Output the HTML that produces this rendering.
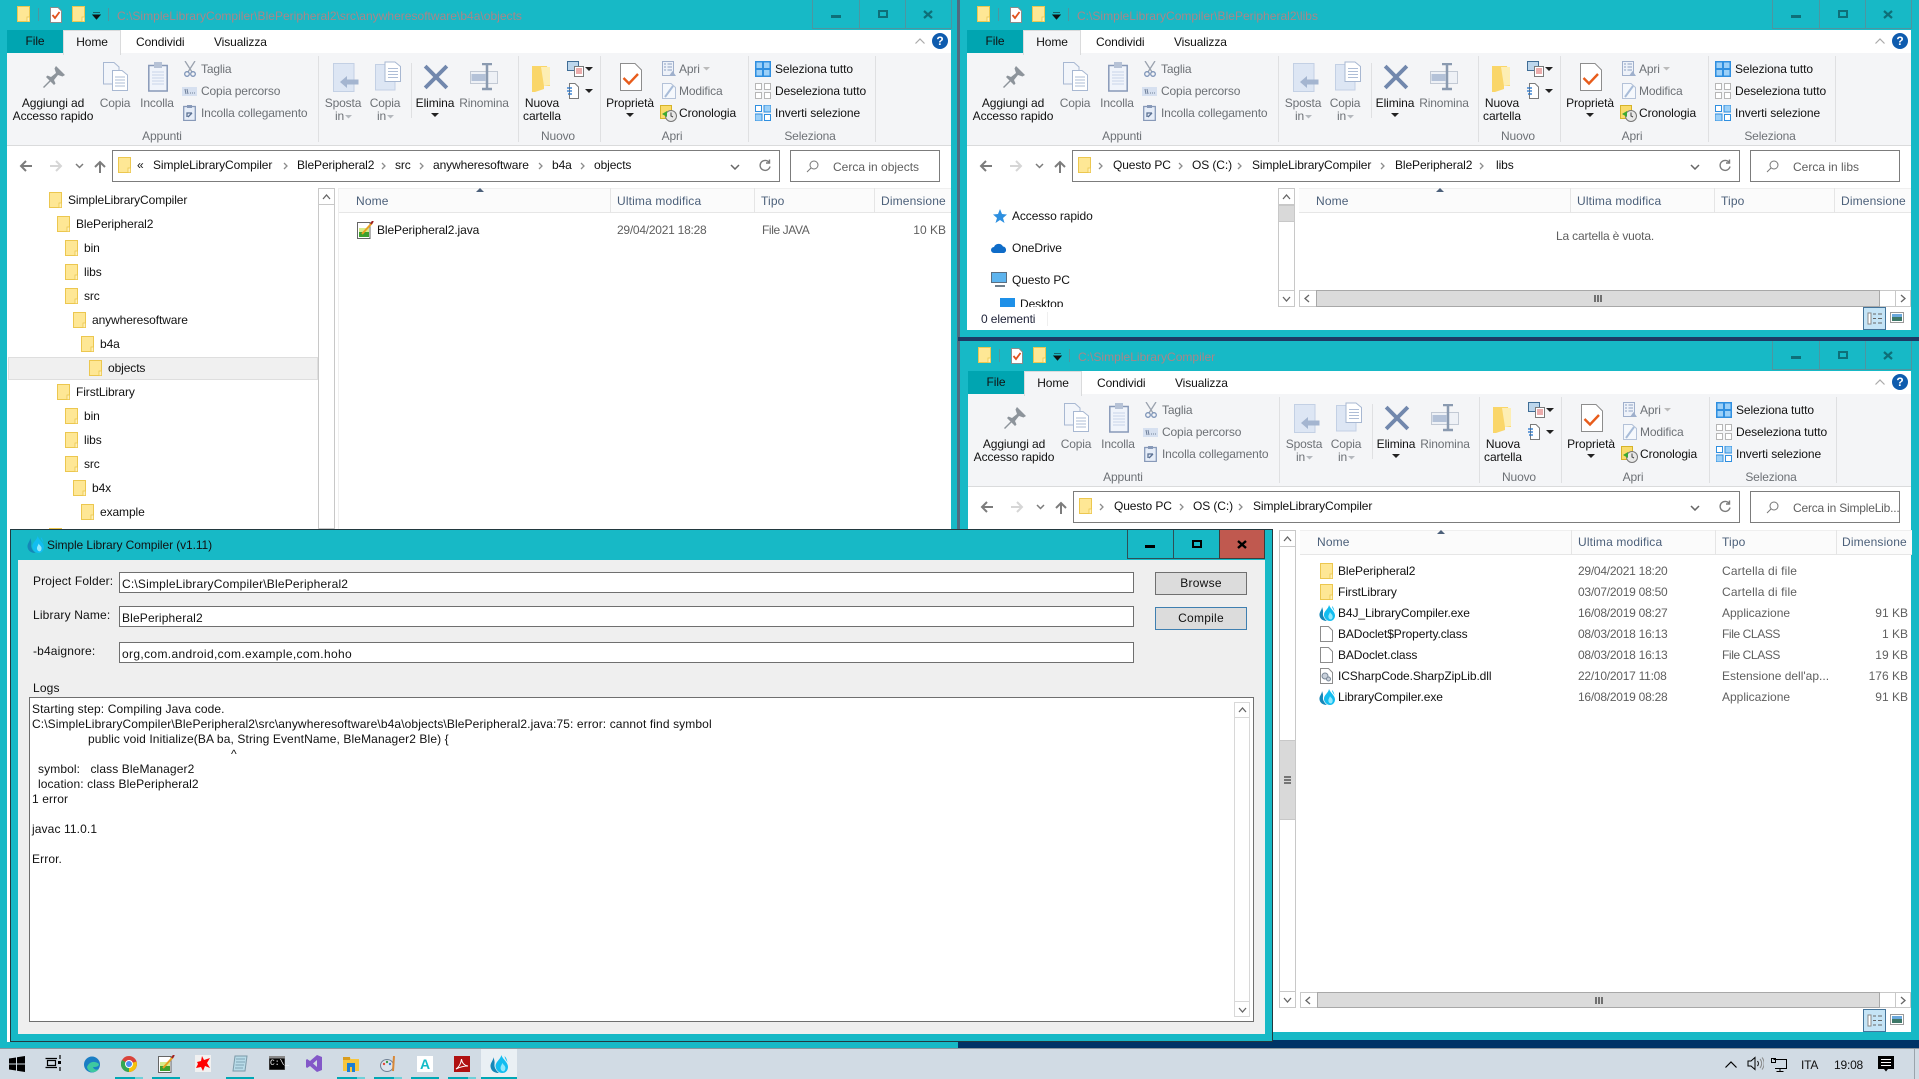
<!DOCTYPE html>
<html lang="it"><head><meta charset="utf-8"><title>Simple Library Compiler</title>
<style>
html,body{margin:0;padding:0;width:1919px;height:1079px;overflow:hidden;background:#17b9c6}
body{position:relative;font:12px/14px "Liberation Sans",sans-serif;color:#1a1a1a;letter-spacing:-.1px}
div,svg,span{position:absolute;box-sizing:border-box}
.t{white-space:pre;height:14px}
.c{transform:translateX(-50%)}
.g{color:#6d7176;letter-spacing:-.15px}
.k{color:#111}
.h{color:#4c607a;letter-spacing:.15px}
.m{color:#5f5f5f;letter-spacing:0}
.d{letter-spacing:-.25px}
.w{overflow:hidden;background:#17b9c6}
.in{left:7px;top:30px;background:#fff}
.rb{left:7px;top:54px;height:91px;background:#f4f5f7;border-bottom:1px solid #dadbdc}
.sep{width:1px;background:#dfe0e2}
.tt{color:#ac8587;left:117px;top:9px;letter-spacing:.02px}
.v{width:1px;background:#4d96a0;top:0;height:29px}
.box{border:1px solid #7c7c7c;background:#fff}
.hd{top:188px;height:25px;background:#fbfbfb;border-bottom:1px solid #e6e6e6;border-top:1px solid #efefef}
.cs{width:1px;top:188px;height:25px;background:#e5e5e5}
.sb{background:#fff;border:1px solid #c8c8c8}
.in2{background:#fff;border:1px solid #6f6f6f}
.btn{background:#dcdcdc;border:1px solid #707070;text-align:center;line-height:21px;color:#111;letter-spacing:.25px}
.ln{white-space:pre;color:#111;height:14px;letter-spacing:.11px}
.f{color:#111;letter-spacing:.15px}
.u{height:2px;top:1077px;background:#00a8b5}
.ul{height:2px;top:1077px;background:#6fd0d8}
</style></head><body>
<svg width="0" height="0" style="left:0;top:0">
<defs>
<symbol id="fd" viewBox="0 0 13 16"><rect x=".5" y=".5" width="12" height="15" fill="#fee795" stroke="#ecc74f"/><rect x="10" y="11" width="2.6" height="4.6" fill="#fff0b8" stroke="#ecc74f" stroke-width=".8"/></symbol>
<symbol id="chk" viewBox="0 0 12 16"><path d="M.5.5H8L11.5 4V15.5H.5Z" fill="#fff" stroke="#8c8c8c"/><path d="M2.5 8 5 11 9.500 5" fill="none" stroke="#e2511c" stroke-width="1.800"/></symbol>
<symbol id="ch" viewBox="0 0 5 8"><path d="M1 1 4 4 1 7" fill="none" stroke="#8c8c8c" stroke-width="1.300"/></symbol>
<symbol id="pin" viewBox="0 0 24 24"><path d="M14 1 23 10 20.500 11.500 16 10 12 15 13.500 18.500 12 20 8.500 16.500 2 23 1 22 7.500 15.500 4 12 5.500 10.500 9 12 14 8 12.500 3.500Z" fill="#8d949b"/></symbol>
<symbol id="cp" viewBox="0 0 25 29"><path d="M.5.5H11L16 5V22H.5Z" fill="#f2f5fa" stroke="#a8b8d2"/><path d="M9.500 8.500H19L24.500 13V28.500H9.500Z" fill="#fff" stroke="#a8b8d2"/><path d="M12 15H22M12 18H22M12 21H22M12 24H22" stroke="#aebdd6"/></symbol>
<symbol id="ps" viewBox="0 0 20 30"><rect x=".8" y="3.500" width="18.400" height="25.500" fill="#f0f4fb" stroke="#8899b8" stroke-width="1.500"/><rect x="6" y="0" width="8" height="6" fill="#b6c2d6"/><path d="M4 10H16M4 13H16M4 16H16M4 19H16M4 22H16" stroke="#c8d4e8"/></symbol>
<symbol id="sc" viewBox="0 0 12 16"><path d="M1 0 8 11M11 0 4 11" stroke="#9aa2ae" stroke-width="1.300"/><circle cx="3" cy="13" r="2.300" fill="none" stroke="#7d94b8" stroke-width="1.300"/><circle cx="9" cy="13" r="2.300" fill="none" stroke="#7d94b8" stroke-width="1.300"/></symbol>
<symbol id="cpp" viewBox="0 0 15 9"><rect width="15" height="9" fill="#d6e0f0"/><path d="M3 2 4 7M5 2 6 7M8 6H9M10 6H11M12 6H13" stroke="#6f7f99"/></symbol>
<symbol id="icl" viewBox="0 0 13 16"><rect x=".7" y="1.500" width="11.600" height="14" fill="#e6edf8" stroke="#8799b8" stroke-width="1.300"/><rect x="4" y="0" width="5" height="3" fill="#8799b8"/><path d="M4 12V8H9M9 8 5 12" fill="none" stroke="#5a7092" stroke-width="1.300"/></symbol>
<symbol id="mv" viewBox="0 0 26 29"><path d="M.5.500H21V28.500H.5Z" fill="#dde6f4" stroke="#c3d0e4"/><path d="M7 19 14 13V16.500H25.500V21.500H14V25Z" fill="#a4b5d0"/></symbol>
<symbol id="cpy" viewBox="0 0 26 29"><path d="M.5 3H20V28.500H.5Z" fill="#dde6f4" stroke="#c3d0e4"/><path d="M10 .5H20L25.500 5V20H10Z" fill="#fff" stroke="#a8b8d2"/><path d="M13 7H23M13 10H23M13 13H23M13 16H23" stroke="#aebdd6"/></symbol>
<symbol id="x" viewBox="0 0 24 24"><path d="M2 2 22 22M22 2 2 22" stroke="#7288ad" stroke-width="3.600"/></symbol>
<symbol id="rn" viewBox="0 0 28 28"><rect x=".5" y="8.500" width="27" height="12" fill="#eef1f6" stroke="#c2c9d4"/><rect x="1.500" y="11" width="14" height="7" fill="#b4c2d8"/><path d="M12 1H22M12 26H22M17 1V26" stroke="#8a9ab0" stroke-width="2.500"/></symbol>
<symbol id="nf" viewBox="0 0 19 28"><path d="M0 1H15L18 21 12 21 12 24 3 27 0 27Z" fill="#fad669"/><path d="M9 2H18V20L12 21 9 2Z" fill="#fdeeb4"/></symbol>
<symbol id="ni" viewBox="0 0 18 16"><rect x=".5" y=".5" width="11" height="9" fill="#bcd6ec" stroke="#3f6d96"/><rect x="7.500" y="5.500" width="9" height="10" fill="#fff" stroke="#7a7a7a"/><path d="M9 8H15M9 10H15M9 12H15" stroke="#d85a5a"/></symbol>
<symbol id="ne" viewBox="0 0 12 16"><path d="M2.500.5H8L11.500 4V15.500H2.500Z" fill="#fff" stroke="#7a7a7a"/><path d="M0 5H5M0 8H5M1 11H5" stroke="#1f6fc8" stroke-width="1.200"/></symbol>
<symbol id="pr" viewBox="0 0 22 28"><path d="M.5.500H15L21.500 7V27.500H.5Z" fill="#fff" stroke="#8d8d8d"/><path d="M3.500 15 9 20.500 18 11" fill="none" stroke="#e85c1b" stroke-width="2.400"/></symbol>
<symbol id="ap" viewBox="0 0 14 16"><rect x=".5" y=".5" width="11" height="14" fill="#eef2f9" stroke="#a0b0cc"/><path d="M2 3H4M2 6H4M2 9H4M5.500 3H10M5.500 6H10M5.500 9H10" stroke="#8fa3c2"/><path d="M7 15 10.500 10 14 15" fill="#9fb0cc"/></symbol>
<symbol id="md" viewBox="0 0 14 16"><path d="M.5.500H9L13.500 4.500V15.500H.5Z" fill="#f5f8fc" stroke="#b4c2d8"/><path d="M3 14 11 3" stroke="#a8bcd8" stroke-width="2"/></symbol>
<symbol id="cr" viewBox="0 0 17 17"><rect x=".5" y=".5" width="11" height="13" fill="#f9dc6b" stroke="#d6b32a"/><circle cx="11" cy="11" r="5.500" fill="#e8e8e8" stroke="#777"/><path d="M11 7.500V11L13 12" stroke="#444" fill="none"/><path d="M2 9 7 6V12Z" fill="#3ea832"/></symbol>
<symbol id="sa" viewBox="0 0 16 16"><rect width="16" height="16" fill="#2f8fe0"/><rect x="1.500" y="1.500" width="5.500" height="5.500" fill="#9cd0f8"/><rect x="9" y="1.500" width="5.500" height="5.500" fill="#9cd0f8"/><rect x="1.500" y="9" width="5.500" height="5.500" fill="#9cd0f8"/><rect x="9" y="9" width="5.500" height="5.500" fill="#9cd0f8"/></symbol>
<symbol id="sn" viewBox="0 0 16 16"><g fill="#fff" stroke="#b6b6b6"><rect x=".5" y=".5" width="6" height="6"/><rect x="9.500" y=".5" width="6" height="6"/><rect x=".5" y="9.500" width="6" height="6"/><rect x="9.500" y="9.500" width="6" height="6"/></g></symbol>
<symbol id="si" viewBox="0 0 16 16"><g stroke="#2f8fe0"><rect x=".5" y=".5" width="6" height="6" fill="#fff"/><rect x="9" y="0" width="7" height="7" fill="#9cd0f8"/><rect x="0" y="9" width="7" height="7" fill="#9cd0f8"/><rect x="9.500" y="9.500" width="6" height="6" fill="#fff"/></g></symbol>
<symbol id="fl" viewBox="0 0 16 16"><path d="M3 2C3 5 0 7 .5 10.500 1 14 4 16 8 16 5.500 14 3.500 11 4 8 4.300 6 3.800 4 3 2Z" fill="#1487b8"/><path d="M10 0C9.500 4 4.500 6 5 10.500 5.500 13.500 8 16 11 16 14 16 16 13.500 16 10.500 16 6.500 11.500 4 10 0Z" fill="#12bdf0"/><path d="M13 1C13 3 14.500 4.500 15.500 6.500 15 4 14.500 2.500 13 1Z" fill="#12bdf0"/><path d="M11 7C10.500 9 9 10 9.500 12.500 10 14 11 14.500 12 14.500 13.500 14 14 12 13.500 10.500 13 9 11.500 8.500 11 7Z" fill="#8fe8fd"/></symbol>
<symbol id="fp" viewBox="0 0 13 16"><path d="M.5.500H8.500L12.500 4.500V15.500H.5Z" fill="#fff" stroke="#8c8c8c"/></symbol>
</defs></svg>

<!-- ===== WINDOW 1 ===== -->
<div class="w" style="left:0;top:0;width:957px;height:1049px">
<svg style="left:17px;top:6px" width="13" height="16"><use href="#fd"/></svg><div class="v" style="left:38px;top:8px;height:13px"></div><svg style="left:50px;top:7px" width="12" height="16"><use href="#chk"/></svg><svg style="left:72px;top:6px" width="13" height="16"><use href="#fd"/></svg><svg style="left:92px;top:12px" width="9" height="8"><path d="M1 0H8M1 3H8L4.500 7Z" stroke="#111" fill="#111"/></svg><div class="v" style="left:108px;top:8px;height:13px"></div>
<div class="t tt">C:\SimpleLibraryCompiler\BlePeripheral2\src\anywheresoftware\b4a\objects</div>
<div class="v" style="left:812px"></div><div class="v" style="left:859px"></div><div class="v" style="left:905px"></div><div class="v" style="left:951px"></div><div style="left:812px;top:28px;width:140px;height:1px;background:#4d96a0"></div>
<div style="left:831px;top:15px;width:10px;height:3px;background:#0e6f78"></div><div style="left:878px;top:10px;width:10px;height:8px;border:2px solid #0e6f78"></div><svg style="left:923px;top:10px" width="10" height="9"><path d="M1 1 9 8M9 1 1 8" stroke="#0e6f78" stroke-width="2.200"/></svg>
<div class="in" style="width:944px;height:1012px"></div>
<div style="left:7px;top:30px;width:56px;height:23px;background:#00a5b1;text-align:center;line-height:23px;color:#111">File</div>
<div style="left:63px;top:30px;width:58px;height:25px;background:#f4f5f7;border:1px solid #dadbdc;border-bottom:0;text-align:center;line-height:22px;z-index:2;color:#111">Home</div>
<div class="t k" style="left:136px;top:35px">Condividi</div><div class="t k" style="left:214px;top:35px">Visualizza</div>
<div class="rb" style="top:53px;width:944px;height:93px"></div>
<svg style="left:915px;top:38px" width="10" height="6"><path d="M.5 5.500 5 1 9.500 5.500" fill="none" stroke="#aaa" stroke-width="1.200"/></svg>
<div style="left:932px;top:33px;width:16px;height:16px;border-radius:50%;background:#0f5cae;color:#fff;text-align:center;font-weight:bold;line-height:16px">?</div>
<svg style="left:42px;top:65px" width="24" height="24"><use href="#pin"/></svg><div class="t k c" style="left:53px;top:96px">Aggiungi ad</div><div class="t k c" style="left:53px;top:109px">Accesso rapido</div>
<svg style="left:103px;top:62px" width="25" height="29"><use href="#cp"/></svg><div class="t g c" style="left:115px;top:96px">Copia</div>
<svg style="left:148px;top:62px" width="20" height="30"><use href="#ps"/></svg><div class="t g c" style="left:157px;top:96px">Incolla</div>
<svg style="left:184px;top:61px" width="12" height="16"><use href="#sc"/></svg><div class="t g" style="left:201px;top:62px">Taglia</div>
<svg style="left:182px;top:87px" width="15" height="9"><use href="#cpp"/></svg><div class="t g" style="left:201px;top:84px">Copia percorso</div>
<svg style="left:183px;top:105px" width="13" height="16"><use href="#icl"/></svg><div class="t g" style="left:201px;top:106px">Incolla collegamento</div>
<div class="t g c" style="left:162px;top:129px">Appunti</div><div class="sep" style="left:318px;top:56px;height:86px"></div>
<svg style="left:333px;top:63px" width="26" height="29"><use href="#mv"/></svg><div class="t g c" style="left:343px;top:96px">Sposta</div><div class="t g" style="left:335px;top:109px">in</div><svg style="left:345px;top:115px" width="8" height="4"><path d="M0 0H7L3.500 3.500Z" fill="#b4b8bd"/></svg>
<svg style="left:375px;top:61px" width="26" height="30"><use href="#cpy"/></svg><div class="t g c" style="left:385px;top:96px">Copia</div><div class="t g" style="left:377px;top:109px">in</div><svg style="left:387px;top:115px" width="8" height="4"><path d="M0 0H7L3.500 3.500Z" fill="#b4b8bd"/></svg>
<div class="sep" style="left:411px;top:63px;height:55px"></div>
<svg style="left:423px;top:64px" width="26" height="26"><use href="#x"/></svg><div class="t k c" style="left:435px;top:96px">Elimina</div><svg style="left:431px;top:113px" width="9" height="5"><path d="M0 0H8L4 4Z" fill="#222"/></svg>
<svg style="left:470px;top:63px" width="28" height="28"><use href="#rn"/></svg><div class="t g c" style="left:484px;top:96px">Rinomina</div>
<div class="sep" style="left:518px;top:56px;height:86px"></div>
<svg style="left:532px;top:65px" width="19" height="28"><use href="#nf"/></svg><div class="t k c" style="left:542px;top:96px">Nuova</div><div class="t k c" style="left:542px;top:109px">cartella</div>
<svg style="left:567px;top:61px" width="18" height="16"><use href="#ni"/></svg><svg style="left:585px;top:67px" width="9" height="5"><path d="M0 0H8L4 4Z" fill="#222"/></svg>
<svg style="left:567px;top:83px" width="12" height="16"><use href="#ne"/></svg><svg style="left:585px;top:89px" width="9" height="5"><path d="M0 0H8L4 4Z" fill="#222"/></svg>
<div class="t g c" style="left:558px;top:129px">Nuovo</div><div class="sep" style="left:600px;top:56px;height:86px"></div>
<svg style="left:620px;top:63px" width="22" height="28"><use href="#pr"/></svg><div class="t k c" style="left:630px;top:96px">Proprietà</div><svg style="left:626px;top:113px" width="9" height="5"><path d="M0 0H8L4 4Z" fill="#222"/></svg>
<svg style="left:662px;top:61px" width="14" height="16"><use href="#ap"/></svg><div class="t g" style="left:679px;top:62px">Apri</div><svg style="left:703px;top:67px" width="8" height="4"><path d="M0 0H7L3.500 3.500Z" fill="#bbb"/></svg>
<svg style="left:662px;top:83px" width="14" height="16"><use href="#md"/></svg><div class="t g" style="left:679px;top:84px">Modifica</div>
<svg style="left:660px;top:105px" width="17" height="17"><use href="#cr"/></svg><div class="t k" style="left:679px;top:106px">Cronologia</div>
<div class="t g c" style="left:672px;top:129px">Apri</div><div class="sep" style="left:748px;top:56px;height:86px"></div>
<svg style="left:755px;top:61px" width="16" height="16"><use href="#sa"/></svg><div class="t k" style="left:775px;top:62px">Seleziona tutto</div>
<svg style="left:755px;top:83px" width="16" height="16"><use href="#sn"/></svg><div class="t k" style="left:775px;top:84px">Deseleziona tutto</div>
<svg style="left:755px;top:105px" width="16" height="16"><use href="#si"/></svg><div class="t k" style="left:775px;top:106px">Inverti selezione</div>
<div class="t g c" style="left:810px;top:129px">Seleziona</div><div class="sep" style="left:875px;top:56px;height:86px"></div>
<svg style="left:19px;top:159px" width="14" height="14"><path d="M13 7H2M7 2 2 7 7 12" fill="none" stroke="#7c7c7c" stroke-width="2"/></svg><svg style="left:49px;top:159px" width="14" height="14"><path d="M1 7H12M7 2 12 7 7 12" fill="none" stroke="#d6d6d6" stroke-width="2"/></svg><svg style="left:75px;top:163px" width="9" height="6"><path d="M1 1 4.500 4.500 8 1" fill="none" stroke="#7c7c7c" stroke-width="1.500"/></svg><svg style="left:93px;top:160px" width="14" height="14"><path d="M7 13V2M2 7 7 2 12 7" fill="none" stroke="#7c7c7c" stroke-width="2"/></svg>
<div class="box" style="left:112px;top:150px;width:668px;height:32px"></div><svg style="left:118px;top:157px" width="13" height="16"><use href="#fd"/></svg>
<div class="t k" style="left:137px;top:158px">«</div><div class="t k" style="left:153px;top:158px">SimpleLibraryCompiler</div><svg style="left:283px;top:162px" width="5" height="8"><use href="#ch"/></svg><div class="t k" style="left:297px;top:158px">BlePeripheral2</div><svg style="left:381px;top:162px" width="5" height="8"><use href="#ch"/></svg><div class="t k" style="left:395px;top:158px">src</div><svg style="left:419px;top:162px" width="5" height="8"><use href="#ch"/></svg><div class="t k" style="left:433px;top:158px">anywheresoftware</div><svg style="left:538px;top:162px" width="5" height="8"><use href="#ch"/></svg><div class="t k" style="left:552px;top:158px">b4a</div><svg style="left:580px;top:162px" width="5" height="8"><use href="#ch"/></svg><div class="t k" style="left:594px;top:158px">objects</div>
<svg style="left:730px;top:164px" width="10" height="6"><path d="M1 1 5 5 9 1" fill="none" stroke="#666" stroke-width="1.500"/></svg><svg style="left:759px;top:159px" width="12" height="13"><path d="M10.500 4A5 5 0 1 0 11 7.500M10.500 .5V4H7" fill="none" stroke="#7c7c7c" stroke-width="1.400"/></svg>
<div class="box" style="left:790px;top:150px;width:150px;height:32px"></div><svg style="left:806px;top:160px" width="13" height="13"><circle cx="8" cy="5" r="4" fill="none" stroke="#777"/><path d="M5 8 1 12" stroke="#777"/></svg><div class="t m" style="left:833px;top:160px">Cerca in objects</div>
<div class="sb" style="left:318px;top:188px;width:17px;height:341px"></div><div class="sb" style="left:318px;top:188px;width:17px;height:17px"></div><svg style="left:322px;top:194px" width="9" height="6"><path d="M1 5 4.500 1 8 5" fill="none" stroke="#666" stroke-width="1.300"/></svg>
<div style="left:338px;top:188px;width:1px;height:341px;background:#efefef"></div>
<div class="hd" style="left:339px;width:612px"></div><div class="cs" style="left:610px"></div><div class="cs" style="left:754px"></div><div class="cs" style="left:874px"></div>
<div class="t h" style="left:356px;top:194px">Nome</div><div class="t h" style="left:617px;top:194px">Ultima modifica</div><div class="t h" style="left:761px;top:194px">Tipo</div><div class="t h" style="left:881px;top:194px">Dimensione</div>
<svg style="left:476px;top:188px" width="8" height="4"><path d="M0 4H8L4 0Z" fill="#4c607a"/></svg>
<svg style="left:357px;top:221px" width="17" height="18"><path d="M.5 1.500H13V17.500H.5Z" fill="#fff" stroke="#666"/><rect x="2" y="11" width="10" height="5" fill="#3da02e"/><rect x="2" y="7" width="10" height="4" fill="#d6ec8a"/><path d="M5 13 15 2" stroke="#e8a020" stroke-width="2"/><path d="M14 3 16 0" stroke="#a02020" stroke-width="2"/></svg>
<div class="t k" style="left:377px;top:223px">BlePeripheral2.java</div><div class="t m d" style="left:617px;top:223px">29/04/2021 18:28</div><div class="t m" style="left:762px;top:223px;letter-spacing:-.4px">File JAVA</div><div class="t m" style="right:11px;top:223px">10 KB</div>
<div style="left:8px;top:357px;width:310px;height:23px;background:#f0f0f0;border:1px solid #dedede"></div>
<svg style="left:49px;top:192px" width="13" height="16"><use href="#fd"/></svg><div class="t k" style="left:68px;top:193px">SimpleLibraryCompiler</div>
<svg style="left:57px;top:216px" width="13" height="16"><use href="#fd"/></svg><div class="t k" style="left:76px;top:217px">BlePeripheral2</div>
<svg style="left:65px;top:240px" width="13" height="16"><use href="#fd"/></svg><div class="t k" style="left:84px;top:241px">bin</div>
<svg style="left:65px;top:264px" width="13" height="16"><use href="#fd"/></svg><div class="t k" style="left:84px;top:265px">libs</div>
<svg style="left:65px;top:288px" width="13" height="16"><use href="#fd"/></svg><div class="t k" style="left:84px;top:289px">src</div>
<svg style="left:73px;top:312px" width="13" height="16"><use href="#fd"/></svg><div class="t k" style="left:92px;top:313px">anywheresoftware</div>
<svg style="left:81px;top:336px" width="13" height="16"><use href="#fd"/></svg><div class="t k" style="left:100px;top:337px">b4a</div>
<svg style="left:89px;top:360px" width="13" height="16"><use href="#fd"/></svg><div class="t k" style="left:108px;top:361px">objects</div>
<svg style="left:57px;top:384px" width="13" height="16"><use href="#fd"/></svg><div class="t k" style="left:76px;top:385px">FirstLibrary</div>
<svg style="left:65px;top:408px" width="13" height="16"><use href="#fd"/></svg><div class="t k" style="left:84px;top:409px">bin</div>
<svg style="left:65px;top:432px" width="13" height="16"><use href="#fd"/></svg><div class="t k" style="left:84px;top:433px">libs</div>
<svg style="left:65px;top:456px" width="13" height="16"><use href="#fd"/></svg><div class="t k" style="left:84px;top:457px">src</div>
<svg style="left:73px;top:480px" width="13" height="16"><use href="#fd"/></svg><div class="t k" style="left:92px;top:481px">b4x</div>
<svg style="left:81px;top:504px" width="13" height="16"><use href="#fd"/></svg><div class="t k" style="left:100px;top:505px">example</div>
<svg style="left:49px;top:528px" width="13" height="16"><use href="#fd"/></svg>
</div>

<!-- dividers -->
<div style="left:957px;top:0;width:3px;height:1040px;background:#4f6c80"></div>
<div style="left:958px;top:1040px;width:961px;height:9px;background:#003366"></div>

<!-- ===== WINDOW 2 ===== -->
<div class="w" style="left:960px;top:0;width:959px;height:337px">
<svg style="left:17px;top:6px" width="13" height="16"><use href="#fd"/></svg><div class="v" style="left:38px;top:8px;height:13px"></div><svg style="left:50px;top:7px" width="12" height="16"><use href="#chk"/></svg><svg style="left:72px;top:6px" width="13" height="16"><use href="#fd"/></svg><svg style="left:92px;top:12px" width="9" height="8"><path d="M1 0H8M1 3H8L4.500 7Z" stroke="#111" fill="#111"/></svg><div class="v" style="left:108px;top:8px;height:13px"></div>
<div class="t tt">C:\SimpleLibraryCompiler\BlePeripheral2\libs</div>
<div class="v" style="left:812px"></div><div class="v" style="left:859px"></div><div class="v" style="left:905px"></div><div class="v" style="left:951px"></div><div style="left:812px;top:28px;width:140px;height:1px;background:#4d96a0"></div>
<div style="left:831px;top:15px;width:10px;height:3px;background:#0e6f78"></div><div style="left:878px;top:10px;width:10px;height:8px;border:2px solid #0e6f78"></div><svg style="left:923px;top:10px" width="10" height="9"><path d="M1 1 9 8M9 1 1 8" stroke="#0e6f78" stroke-width="2.200"/></svg>
<div class="in" style="width:944px;height:300px"></div>
<div style="left:7px;top:30px;width:56px;height:23px;background:#00a5b1;text-align:center;line-height:23px;color:#111">File</div>
<div style="left:63px;top:30px;width:58px;height:25px;background:#f4f5f7;border:1px solid #dadbdc;border-bottom:0;text-align:center;line-height:22px;z-index:2;color:#111">Home</div>
<div class="t k" style="left:136px;top:35px">Condividi</div><div class="t k" style="left:214px;top:35px">Visualizza</div>
<div class="rb" style="top:53px;width:944px;height:93px"></div>
<svg style="left:915px;top:38px" width="10" height="6"><path d="M.5 5.500 5 1 9.500 5.500" fill="none" stroke="#aaa" stroke-width="1.200"/></svg>
<div style="left:932px;top:33px;width:16px;height:16px;border-radius:50%;background:#0f5cae;color:#fff;text-align:center;font-weight:bold;line-height:16px">?</div>
<svg style="left:42px;top:65px" width="24" height="24"><use href="#pin"/></svg><div class="t k c" style="left:53px;top:96px">Aggiungi ad</div><div class="t k c" style="left:53px;top:109px">Accesso rapido</div>
<svg style="left:103px;top:62px" width="25" height="29"><use href="#cp"/></svg><div class="t g c" style="left:115px;top:96px">Copia</div>
<svg style="left:148px;top:62px" width="20" height="30"><use href="#ps"/></svg><div class="t g c" style="left:157px;top:96px">Incolla</div>
<svg style="left:184px;top:61px" width="12" height="16"><use href="#sc"/></svg><div class="t g" style="left:201px;top:62px">Taglia</div>
<svg style="left:182px;top:87px" width="15" height="9"><use href="#cpp"/></svg><div class="t g" style="left:201px;top:84px">Copia percorso</div>
<svg style="left:183px;top:105px" width="13" height="16"><use href="#icl"/></svg><div class="t g" style="left:201px;top:106px">Incolla collegamento</div>
<div class="t g c" style="left:162px;top:129px">Appunti</div><div class="sep" style="left:318px;top:56px;height:86px"></div>
<svg style="left:333px;top:63px" width="26" height="29"><use href="#mv"/></svg><div class="t g c" style="left:343px;top:96px">Sposta</div><div class="t g" style="left:335px;top:109px">in</div><svg style="left:345px;top:115px" width="8" height="4"><path d="M0 0H7L3.500 3.500Z" fill="#b4b8bd"/></svg>
<svg style="left:375px;top:61px" width="26" height="30"><use href="#cpy"/></svg><div class="t g c" style="left:385px;top:96px">Copia</div><div class="t g" style="left:377px;top:109px">in</div><svg style="left:387px;top:115px" width="8" height="4"><path d="M0 0H7L3.500 3.500Z" fill="#b4b8bd"/></svg>
<div class="sep" style="left:411px;top:63px;height:55px"></div>
<svg style="left:423px;top:64px" width="26" height="26"><use href="#x"/></svg><div class="t k c" style="left:435px;top:96px">Elimina</div><svg style="left:431px;top:113px" width="9" height="5"><path d="M0 0H8L4 4Z" fill="#222"/></svg>
<svg style="left:470px;top:63px" width="28" height="28"><use href="#rn"/></svg><div class="t g c" style="left:484px;top:96px">Rinomina</div>
<div class="sep" style="left:518px;top:56px;height:86px"></div>
<svg style="left:532px;top:65px" width="19" height="28"><use href="#nf"/></svg><div class="t k c" style="left:542px;top:96px">Nuova</div><div class="t k c" style="left:542px;top:109px">cartella</div>
<svg style="left:567px;top:61px" width="18" height="16"><use href="#ni"/></svg><svg style="left:585px;top:67px" width="9" height="5"><path d="M0 0H8L4 4Z" fill="#222"/></svg>
<svg style="left:567px;top:83px" width="12" height="16"><use href="#ne"/></svg><svg style="left:585px;top:89px" width="9" height="5"><path d="M0 0H8L4 4Z" fill="#222"/></svg>
<div class="t g c" style="left:558px;top:129px">Nuovo</div><div class="sep" style="left:600px;top:56px;height:86px"></div>
<svg style="left:620px;top:63px" width="22" height="28"><use href="#pr"/></svg><div class="t k c" style="left:630px;top:96px">Proprietà</div><svg style="left:626px;top:113px" width="9" height="5"><path d="M0 0H8L4 4Z" fill="#222"/></svg>
<svg style="left:662px;top:61px" width="14" height="16"><use href="#ap"/></svg><div class="t g" style="left:679px;top:62px">Apri</div><svg style="left:703px;top:67px" width="8" height="4"><path d="M0 0H7L3.500 3.500Z" fill="#bbb"/></svg>
<svg style="left:662px;top:83px" width="14" height="16"><use href="#md"/></svg><div class="t g" style="left:679px;top:84px">Modifica</div>
<svg style="left:660px;top:105px" width="17" height="17"><use href="#cr"/></svg><div class="t k" style="left:679px;top:106px">Cronologia</div>
<div class="t g c" style="left:672px;top:129px">Apri</div><div class="sep" style="left:748px;top:56px;height:86px"></div>
<svg style="left:755px;top:61px" width="16" height="16"><use href="#sa"/></svg><div class="t k" style="left:775px;top:62px">Seleziona tutto</div>
<svg style="left:755px;top:83px" width="16" height="16"><use href="#sn"/></svg><div class="t k" style="left:775px;top:84px">Deseleziona tutto</div>
<svg style="left:755px;top:105px" width="16" height="16"><use href="#si"/></svg><div class="t k" style="left:775px;top:106px">Inverti selezione</div>
<div class="t g c" style="left:810px;top:129px">Seleziona</div><div class="sep" style="left:875px;top:56px;height:86px"></div>
<svg style="left:19px;top:159px" width="14" height="14"><path d="M13 7H2M7 2 2 7 7 12" fill="none" stroke="#7c7c7c" stroke-width="2"/></svg><svg style="left:49px;top:159px" width="14" height="14"><path d="M1 7H12M7 2 12 7 7 12" fill="none" stroke="#d6d6d6" stroke-width="2"/></svg><svg style="left:75px;top:163px" width="9" height="6"><path d="M1 1 4.500 4.500 8 1" fill="none" stroke="#7c7c7c" stroke-width="1.500"/></svg><svg style="left:93px;top:160px" width="14" height="14"><path d="M7 13V2M2 7 7 2 12 7" fill="none" stroke="#7c7c7c" stroke-width="2"/></svg>
<div class="box" style="left:112px;top:150px;width:668px;height:32px"></div><svg style="left:118px;top:157px" width="13" height="16"><use href="#fd"/></svg>
<svg style="left:138px;top:162px" width="5" height="8"><use href="#ch"/></svg><div class="t k" style="left:153px;top:158px">Questo PC</div><svg style="left:218px;top:162px" width="5" height="8"><use href="#ch"/></svg><div class="t k" style="left:232px;top:158px">OS (C:)</div><svg style="left:277px;top:162px" width="5" height="8"><use href="#ch"/></svg><div class="t k" style="left:292px;top:158px">SimpleLibraryCompiler</div><svg style="left:420px;top:162px" width="5" height="8"><use href="#ch"/></svg><div class="t k" style="left:435px;top:158px">BlePeripheral2</div><svg style="left:519px;top:162px" width="5" height="8"><use href="#ch"/></svg><div class="t k" style="left:536px;top:158px">libs</div>
<svg style="left:730px;top:164px" width="10" height="6"><path d="M1 1 5 5 9 1" fill="none" stroke="#666" stroke-width="1.500"/></svg><svg style="left:759px;top:159px" width="12" height="13"><path d="M10.500 4A5 5 0 1 0 11 7.500M10.500 .5V4H7" fill="none" stroke="#7c7c7c" stroke-width="1.400"/></svg>
<div class="box" style="left:790px;top:150px;width:150px;height:32px"></div><svg style="left:806px;top:160px" width="13" height="13"><circle cx="8" cy="5" r="4" fill="none" stroke="#777"/><path d="M5 8 1 12" stroke="#777"/></svg><div class="t m" style="left:833px;top:160px">Cerca in libs</div>
<svg style="left:33px;top:209px" width="14" height="14"><path d="M7 0 9 5 14 5.500 10 9 11.500 14 7 11 2.500 14 4 9 0 5.500 5 5Z" fill="#2d8fe0"/></svg><div class="t k" style="left:52px;top:209px">Accesso rapido</div>
<svg style="left:31px;top:243px" width="16" height="10"><path d="M3 10A3 3 0 0 1 3 4 5 5 0 0 1 12 3.500 3.400 3.400 0 0 1 13 10Z" fill="#0f6cc8"/></svg><div class="t k" style="left:52px;top:241px">OneDrive</div>
<svg style="left:31px;top:272px" width="16" height="16"><rect x=".5" y=".5" width="15" height="10" fill="#5db4ee" stroke="#5a6f82"/><path d="M4 14H14" stroke="#6f7f8c" stroke-width="2"/></svg><div class="t k" style="left:52px;top:273px">Questo PC</div>
<div style="left:0;top:296px;width:318px;height:11px;overflow:hidden"><svg style="left:40px;top:2px" width="15" height="9"><rect width="15" height="9" fill="#1e90e8"/></svg><div class="t k" style="left:60px;top:1px">Desktop</div></div>
<div class="sb" style="left:318px;top:188px;width:17px;height:119px"></div><div class="sb" style="left:318px;top:188px;width:17px;height:17px"></div><div class="sb" style="left:318px;top:205px;width:17px;height:17px;background:#d9d9d9"></div><div class="sb" style="left:318px;top:290px;width:17px;height:17px"></div>
<svg style="left:322px;top:194px" width="9" height="6"><path d="M1 5 4.500 1 8 5" fill="none" stroke="#666" stroke-width="1.300"/></svg><svg style="left:322px;top:296px" width="9" height="6"><path d="M1 1 4.500 5 8 1" fill="none" stroke="#666" stroke-width="1.300"/></svg>
<div class="hd" style="left:339px;width:612px"></div><div class="cs" style="left:610px"></div><div class="cs" style="left:754px"></div><div class="cs" style="left:874px"></div>
<div class="t h" style="left:356px;top:194px">Nome</div><div class="t h" style="left:617px;top:194px">Ultima modifica</div><div class="t h" style="left:761px;top:194px">Tipo</div><div class="t h" style="left:881px;top:194px">Dimensione</div>
<svg style="left:476px;top:188px" width="8" height="4"><path d="M0 4H8L4 0Z" fill="#4c607a"/></svg>
<div class="t m" style="left:596px;top:229px;letter-spacing:-.17px">La cartella è vuota.</div>
<div style="left:339px;top:290px;width:612px;height:17px;background:#fff;border:1px solid #c8c8c8"></div><div style="left:356px;top:290px;width:564px;height:17px;background:#dbdbdb;border:1px solid #a8a8a8"></div><div style="left:935px;top:290px;width:1px;height:17px;background:#c8c8c8"></div>
<svg style="left:344px;top:294px" width="6" height="9"><path d="M5 1 1 4.500 5 8" fill="none" stroke="#666" stroke-width="1.300"/></svg><svg style="left:940px;top:294px" width="6" height="9"><path d="M1 1 5 4.500 1 8" fill="none" stroke="#666" stroke-width="1.300"/></svg>
<svg style="left:634px;top:295px" width="8" height="7"><path d="M1 0V7M4 0V7M7 0V7" stroke="#555" stroke-width="1.600"/></svg>
<div class="t" style="left:21px;top:312px;color:#20243a">0 elementi</div><div style="left:87px;top:312px;width:1px;height:14px;background:#efefef"></div>
<div style="left:903px;top:307px;width:23px;height:23px;background:#c5e4f6;border:1px solid #44749a"></div><svg style="left:907px;top:312px" width="16" height="13"><path d="M1 1H4V12H1Z" fill="#fff" stroke="#888"/><path d="M6 2H9M11 2H15M6 6.500H9M11 6.500H15M6 11H9M11 11H15" stroke="#666"/></svg>
<svg style="left:930px;top:312px" width="14" height="11"><rect x=".5" y=".5" width="13" height="10" fill="#fff" stroke="#999"/><rect x="2" y="2" width="10" height="3" fill="#6aa8dc"/><rect x="2" y="5" width="10" height="4" fill="#3d7868"/></svg>
</div>
<div style="left:958px;top:337px;width:961px;height:4px;background:#1d3a64"></div>

<!-- ===== WINDOW 3 ===== -->
<div class="w" style="left:961px;top:341px;width:958px;height:699px">
<svg style="left:17px;top:6px" width="13" height="16"><use href="#fd"/></svg><div class="v" style="left:38px;top:8px;height:13px"></div><svg style="left:50px;top:7px" width="12" height="16"><use href="#chk"/></svg><svg style="left:72px;top:6px" width="13" height="16"><use href="#fd"/></svg><svg style="left:92px;top:12px" width="9" height="8"><path d="M1 0H8M1 3H8L4.500 7Z" stroke="#111" fill="#111"/></svg><div class="v" style="left:108px;top:8px;height:13px"></div>
<div class="t tt">C:\SimpleLibraryCompiler</div>
<div class="v" style="left:811px"></div><div class="v" style="left:858px"></div><div class="v" style="left:904px"></div><div class="v" style="left:950px"></div><div style="left:811px;top:28px;width:140px;height:1px;background:#4d96a0"></div>
<div style="left:830px;top:15px;width:10px;height:3px;background:#0e6f78"></div><div style="left:877px;top:10px;width:10px;height:8px;border:2px solid #0e6f78"></div><svg style="left:922px;top:10px" width="10" height="9"><path d="M1 1 9 8M9 1 1 8" stroke="#0e6f78" stroke-width="2.200"/></svg>
<div class="in" style="width:943px;height:661px"></div>
<div style="left:7px;top:30px;width:56px;height:23px;background:#00a5b1;text-align:center;line-height:23px;color:#111">File</div>
<div style="left:63px;top:30px;width:58px;height:25px;background:#f4f5f7;border:1px solid #dadbdc;border-bottom:0;text-align:center;line-height:22px;z-index:2;color:#111">Home</div>
<div class="t k" style="left:136px;top:35px">Condividi</div><div class="t k" style="left:214px;top:35px">Visualizza</div>
<div class="rb" style="top:53px;width:943px;height:93px"></div>
<svg style="left:914px;top:38px" width="10" height="6"><path d="M.5 5.500 5 1 9.500 5.500" fill="none" stroke="#aaa" stroke-width="1.200"/></svg>
<div style="left:931px;top:33px;width:16px;height:16px;border-radius:50%;background:#0f5cae;color:#fff;text-align:center;font-weight:bold;line-height:16px">?</div>
<svg style="left:42px;top:65px" width="24" height="24"><use href="#pin"/></svg><div class="t k c" style="left:53px;top:96px">Aggiungi ad</div><div class="t k c" style="left:53px;top:109px">Accesso rapido</div>
<svg style="left:103px;top:62px" width="25" height="29"><use href="#cp"/></svg><div class="t g c" style="left:115px;top:96px">Copia</div>
<svg style="left:148px;top:62px" width="20" height="30"><use href="#ps"/></svg><div class="t g c" style="left:157px;top:96px">Incolla</div>
<svg style="left:184px;top:61px" width="12" height="16"><use href="#sc"/></svg><div class="t g" style="left:201px;top:62px">Taglia</div>
<svg style="left:182px;top:87px" width="15" height="9"><use href="#cpp"/></svg><div class="t g" style="left:201px;top:84px">Copia percorso</div>
<svg style="left:183px;top:105px" width="13" height="16"><use href="#icl"/></svg><div class="t g" style="left:201px;top:106px">Incolla collegamento</div>
<div class="t g c" style="left:162px;top:129px">Appunti</div><div class="sep" style="left:318px;top:56px;height:86px"></div>
<svg style="left:333px;top:63px" width="26" height="29"><use href="#mv"/></svg><div class="t g c" style="left:343px;top:96px">Sposta</div><div class="t g" style="left:335px;top:109px">in</div><svg style="left:345px;top:115px" width="8" height="4"><path d="M0 0H7L3.500 3.500Z" fill="#b4b8bd"/></svg>
<svg style="left:375px;top:61px" width="26" height="30"><use href="#cpy"/></svg><div class="t g c" style="left:385px;top:96px">Copia</div><div class="t g" style="left:377px;top:109px">in</div><svg style="left:387px;top:115px" width="8" height="4"><path d="M0 0H7L3.500 3.500Z" fill="#b4b8bd"/></svg>
<div class="sep" style="left:411px;top:63px;height:55px"></div>
<svg style="left:423px;top:64px" width="26" height="26"><use href="#x"/></svg><div class="t k c" style="left:435px;top:96px">Elimina</div><svg style="left:431px;top:113px" width="9" height="5"><path d="M0 0H8L4 4Z" fill="#222"/></svg>
<svg style="left:470px;top:63px" width="28" height="28"><use href="#rn"/></svg><div class="t g c" style="left:484px;top:96px">Rinomina</div>
<div class="sep" style="left:518px;top:56px;height:86px"></div>
<svg style="left:532px;top:65px" width="19" height="28"><use href="#nf"/></svg><div class="t k c" style="left:542px;top:96px">Nuova</div><div class="t k c" style="left:542px;top:109px">cartella</div>
<svg style="left:567px;top:61px" width="18" height="16"><use href="#ni"/></svg><svg style="left:585px;top:67px" width="9" height="5"><path d="M0 0H8L4 4Z" fill="#222"/></svg>
<svg style="left:567px;top:83px" width="12" height="16"><use href="#ne"/></svg><svg style="left:585px;top:89px" width="9" height="5"><path d="M0 0H8L4 4Z" fill="#222"/></svg>
<div class="t g c" style="left:558px;top:129px">Nuovo</div><div class="sep" style="left:600px;top:56px;height:86px"></div>
<svg style="left:620px;top:63px" width="22" height="28"><use href="#pr"/></svg><div class="t k c" style="left:630px;top:96px">Proprietà</div><svg style="left:626px;top:113px" width="9" height="5"><path d="M0 0H8L4 4Z" fill="#222"/></svg>
<svg style="left:662px;top:61px" width="14" height="16"><use href="#ap"/></svg><div class="t g" style="left:679px;top:62px">Apri</div><svg style="left:703px;top:67px" width="8" height="4"><path d="M0 0H7L3.500 3.500Z" fill="#bbb"/></svg>
<svg style="left:662px;top:83px" width="14" height="16"><use href="#md"/></svg><div class="t g" style="left:679px;top:84px">Modifica</div>
<svg style="left:660px;top:105px" width="17" height="17"><use href="#cr"/></svg><div class="t k" style="left:679px;top:106px">Cronologia</div>
<div class="t g c" style="left:672px;top:129px">Apri</div><div class="sep" style="left:748px;top:56px;height:86px"></div>
<svg style="left:755px;top:61px" width="16" height="16"><use href="#sa"/></svg><div class="t k" style="left:775px;top:62px">Seleziona tutto</div>
<svg style="left:755px;top:83px" width="16" height="16"><use href="#sn"/></svg><div class="t k" style="left:775px;top:84px">Deseleziona tutto</div>
<svg style="left:755px;top:105px" width="16" height="16"><use href="#si"/></svg><div class="t k" style="left:775px;top:106px">Inverti selezione</div>
<div class="t g c" style="left:810px;top:129px">Seleziona</div><div class="sep" style="left:875px;top:56px;height:86px"></div>
<svg style="left:19px;top:159px" width="14" height="14"><path d="M13 7H2M7 2 2 7 7 12" fill="none" stroke="#7c7c7c" stroke-width="2"/></svg><svg style="left:49px;top:159px" width="14" height="14"><path d="M1 7H12M7 2 12 7 7 12" fill="none" stroke="#d6d6d6" stroke-width="2"/></svg><svg style="left:75px;top:163px" width="9" height="6"><path d="M1 1 4.500 4.500 8 1" fill="none" stroke="#7c7c7c" stroke-width="1.500"/></svg><svg style="left:93px;top:160px" width="14" height="14"><path d="M7 13V2M2 7 7 2 12 7" fill="none" stroke="#7c7c7c" stroke-width="2"/></svg>
<div class="box" style="left:112px;top:150px;width:667px;height:32px"></div><svg style="left:118px;top:157px" width="13" height="16"><use href="#fd"/></svg>
<svg style="left:138px;top:162px" width="5" height="8"><use href="#ch"/></svg><div class="t k" style="left:153px;top:158px">Questo PC</div><svg style="left:218px;top:162px" width="5" height="8"><use href="#ch"/></svg><div class="t k" style="left:232px;top:158px">OS (C:)</div><svg style="left:277px;top:162px" width="5" height="8"><use href="#ch"/></svg><div class="t k" style="left:292px;top:158px">SimpleLibraryCompiler</div>
<svg style="left:729px;top:164px" width="10" height="6"><path d="M1 1 5 5 9 1" fill="none" stroke="#666" stroke-width="1.500"/></svg><svg style="left:758px;top:159px" width="12" height="13"><path d="M10.500 4A5 5 0 1 0 11 7.500M10.500 .5V4H7" fill="none" stroke="#7c7c7c" stroke-width="1.400"/></svg>
<div class="box" style="left:789px;top:150px;width:150px;height:32px"></div><svg style="left:805px;top:160px" width="13" height="13"><circle cx="8" cy="5" r="4" fill="none" stroke="#777"/><path d="M5 8 1 12" stroke="#777"/></svg><div class="t m" style="left:832px;top:160px;letter-spacing:-.2px">Cerca in SimpleLib...</div>
<div class="sb" style="left:318px;top:189px;width:17px;height:478px"></div><div class="sb" style="left:318px;top:189px;width:17px;height:17px"></div><div class="sb" style="left:318px;top:650px;width:17px;height:17px"></div><div class="sb" style="left:318px;top:399px;width:17px;height:80px;background:#d9d9d9"></div>
<svg style="left:322px;top:195px" width="9" height="6"><path d="M1 5 4.500 1 8 5" fill="none" stroke="#666" stroke-width="1.300"/></svg><svg style="left:322px;top:656px" width="9" height="6"><path d="M1 1 4.500 5 8 1" fill="none" stroke="#666" stroke-width="1.300"/></svg><svg style="left:323px;top:435px" width="7" height="8"><path d="M0 1H7M0 4H7M0 7H7" stroke="#555" stroke-width="1.500"/></svg>
<div class="hd" style="left:339px;width:612px;top:189px"></div><div class="cs" style="left:610px;top:189px"></div><div class="cs" style="left:754px;top:189px"></div><div class="cs" style="left:875px;top:189px"></div>
<div class="t h" style="left:356px;top:194px">Nome</div><div class="t h" style="left:617px;top:194px">Ultima modifica</div><div class="t h" style="left:761px;top:194px">Tipo</div><div class="t h" style="left:881px;top:194px">Dimensione</div>
<svg style="left:476px;top:189px" width="8" height="4"><path d="M0 4H8L4 0Z" fill="#4c607a"/></svg>
<svg style="left:359px;top:222px" width="13" height="16"><use href="#fd"/></svg><div class="t k" style="left:377px;top:223px">BlePeripheral2</div><div class="t m d" style="left:617px;top:223px">29/04/2021 18:20</div><div class="t m" style="left:761px;top:223px;letter-spacing:.15px">Cartella di file</div>
<svg style="left:359px;top:243px" width="13" height="16"><use href="#fd"/></svg><div class="t k" style="left:377px;top:244px">FirstLibrary</div><div class="t m d" style="left:617px;top:244px">03/07/2019 08:50</div><div class="t m" style="left:761px;top:244px;letter-spacing:.15px">Cartella di file</div>
<svg style="left:358px;top:264px" width="16" height="16"><use href="#fl"/></svg><div class="t k" style="left:377px;top:265px">B4J_LibraryCompiler.exe</div><div class="t m d" style="left:617px;top:265px">16/08/2019 08:27</div><div class="t m" style="left:761px;top:265px">Applicazione</div><div class="t m" style="right:11px;top:265px">91 KB</div>
<svg style="left:359px;top:285px" width="13" height="16"><use href="#fp"/></svg><div class="t k" style="left:377px;top:286px">BADoclet$Property.class</div><div class="t m d" style="left:617px;top:286px">08/03/2018 16:13</div><div class="t m" style="left:761px;top:286px;letter-spacing:-.4px">File CLASS</div><div class="t m" style="right:11px;top:286px">1 KB</div>
<svg style="left:359px;top:306px" width="13" height="16"><use href="#fp"/></svg><div class="t k" style="left:377px;top:307px">BADoclet.class</div><div class="t m d" style="left:617px;top:307px">08/03/2018 16:13</div><div class="t m" style="left:761px;top:307px;letter-spacing:-.4px">File CLASS</div><div class="t m" style="right:11px;top:307px">19 KB</div>
<svg style="left:359px;top:327px" width="13" height="16"><use href="#fp"/><circle cx="5" cy="8" r="3" fill="#c8d0da" stroke="#7a8898"/><circle cx="8.500" cy="11" r="2" fill="#c8d0da" stroke="#7a8898"/></svg><div class="t k" style="left:377px;top:328px">ICSharpCode.SharpZipLib.dll</div><div class="t m d" style="left:617px;top:328px">22/10/2017 11:08</div><div class="t m" style="left:761px;top:328px">Estensione dell'ap...</div><div class="t m" style="right:11px;top:328px">176 KB</div>
<svg style="left:358px;top:348px" width="16" height="16"><use href="#fl"/></svg><div class="t k" style="left:377px;top:349px">LibraryCompiler.exe</div><div class="t m d" style="left:617px;top:349px">16/08/2019 08:28</div><div class="t m" style="left:761px;top:349px">Applicazione</div><div class="t m" style="right:11px;top:349px">91 KB</div>
<div style="left:339px;top:651px;width:611px;height:16px;background:#fff;border:1px solid #c8c8c8"></div><div style="left:356px;top:651px;width:563px;height:16px;background:#dbdbdb;border:1px solid #a8a8a8"></div><div style="left:934px;top:651px;width:1px;height:16px;background:#c8c8c8"></div>
<svg style="left:344px;top:655px" width="6" height="9"><path d="M5 1 1 4.500 5 8" fill="none" stroke="#666" stroke-width="1.300"/></svg><svg style="left:939px;top:655px" width="6" height="9"><path d="M1 1 5 4.500 1 8" fill="none" stroke="#666" stroke-width="1.300"/></svg>
<svg style="left:634px;top:656px" width="8" height="7"><path d="M1 0V7M4 0V7M7 0V7" stroke="#555" stroke-width="1.600"/></svg>
<div style="left:902px;top:668px;width:23px;height:23px;background:#c5e4f6;border:1px solid #44749a"></div><svg style="left:906px;top:673px" width="16" height="13"><path d="M1 1H4V12H1Z" fill="#fff" stroke="#888"/><path d="M6 2H9M11 2H15M6 6.500H9M11 6.500H15M6 11H9M11 11H15" stroke="#666"/></svg>
<svg style="left:929px;top:673px" width="14" height="11"><rect x=".5" y=".5" width="13" height="10" fill="#fff" stroke="#999"/><rect x="2" y="2" width="10" height="3" fill="#6aa8dc"/><rect x="2" y="5" width="10" height="4" fill="#3d7868"/></svg>
</div>

<!-- ===== COMPILER ===== -->
<div style="left:10px;top:529px;width:1263px;height:513px;background:#17b9c6;border:1px solid #23393f">
<svg style="left:16px;top:6px" width="17" height="17"><use href="#fl"/></svg>
<div class="t f" style="left:36px;top:8px;letter-spacing:-.09px">Simple Library Compiler (v1.11)</div>
<div style="left:1116px;top:0;width:47px;height:29px;border:1px solid #2f4f56;border-width:0 0 1px 1px"></div>
<div style="left:1162px;top:0;width:47px;height:29px;border:1px solid #2f4f56;border-width:0 0 1px 1px"></div>
<div style="left:1208px;top:0;width:46px;height:29px;background:#c0594f;border:1px solid #3c3c3c;border-width:0 1px 1px 1px"></div>
<div style="left:1134px;top:15px;width:10px;height:3px;background:#000"></div><div style="left:1181px;top:10px;width:10px;height:8px;border:2px solid #000"></div><svg style="left:1226px;top:10px" width="10" height="9"><path d="M1 1 9 8M9 1 1 8" stroke="#000" stroke-width="2.400"/></svg>
<div style="left:7px;top:30px;width:1247px;height:474px;background:#efefef"></div>
<div class="t f" style="left:22px;top:44px">Project Folder:</div><div class="t f" style="left:22px;top:78px">Library Name:</div><div class="t f" style="left:22px;top:114px">-b4aignore:</div><div class="t f" style="left:22px;top:151px">Logs</div>
<div class="in2" style="left:108px;top:42px;width:1015px;height:21px"></div><div class="t f" style="left:111px;top:47px;letter-spacing:.19px">C:\SimpleLibraryCompiler\BlePeripheral2</div>
<div class="in2" style="left:108px;top:76px;width:1015px;height:21px"></div><div class="t f" style="left:111px;top:81px">BlePeripheral2</div>
<div class="in2" style="left:108px;top:112px;width:1015px;height:21px"></div><div class="t f" style="left:111px;top:117px;letter-spacing:.35px">org,com.android,com.example,com.hoho</div>
<div class="btn" style="left:1144px;top:42px;width:92px;height:23px">Browse</div>
<div class="btn" style="left:1144px;top:77px;width:92px;height:23px;border-color:#3f7fb0">Compile</div>
<div style="left:18px;top:167px;width:1225px;height:325px;background:#fff;border:1px solid #6f6f6f"></div>
<div class="sb" style="left:1223px;top:172px;width:16px;height:315px;border-color:#d8d8d8"></div><div class="sb" style="left:1223px;top:172px;width:16px;height:16px;border-color:#d8d8d8"></div><div class="sb" style="left:1223px;top:471px;width:16px;height:16px;border-color:#d8d8d8"></div>
<svg style="left:1227px;top:177px" width="9" height="6"><path d="M1 5 4.500 1 8 5" fill="none" stroke="#666" stroke-width="1.300"/></svg><svg style="left:1227px;top:477px" width="9" height="6"><path d="M1 1 4.500 5 8 1" fill="none" stroke="#666" stroke-width="1.300"/></svg>
<div class="ln" style="top:172px;left:21px">Starting step: Compiling Java code.</div>
<div class="ln" style="top:187px;left:21px">C:\SimpleLibraryCompiler\BlePeripheral2\src\anywheresoftware\b4a\objects\BlePeripheral2.java:75: error: cannot find symbol</div>
<div class="ln" style="top:202px;left:77px">public void Initialize(BA ba, String EventName, BleManager2 Ble) {</div>
<div class="ln" style="top:217px;left:220px">^</div>
<div class="ln" style="top:232px;left:27px">symbol:   class BleManager2</div>
<div class="ln" style="top:247px;left:27px">location: class BlePeripheral2</div>
<div class="ln" style="top:262px;left:21px">1 error</div>
<div class="ln" style="top:292px;left:21px">javac 11.0.1</div>
<div class="ln" style="top:322px;left:21px">Error.</div>
</div>

<!-- ===== TASKBAR ===== -->
<div style="left:0;top:1048px;width:1919px;height:31px;background:#d1dbe4;border-top:1px solid #8c969e"></div>
<div style="left:481px;top:1049px;width:36px;height:30px;background:#eaf0f4"></div>
<svg style="left:9px;top:1056px" width="16" height="16"><path d="M0 2.500 7 1.500V7.500H0ZM8 1.300 16 0V7.500H8ZM0 8.500H7V14.500L0 13.500ZM8 8.500H16V16L8 14.700Z" fill="#000"/></svg>
<svg style="left:45px;top:1055px" width="16" height="16"><path d="M.5 3.500H12M.5 12.500H12M2.500 5.500H10.500V10.500H2.500ZM15 0V4M15 12V16" fill="none" stroke="#000" stroke-width="1.200"/><rect x="13" y="6" width="3" height="3" fill="#000"/></svg>
<svg style="left:84px;top:1056px" width="16" height="17"><circle cx="8" cy="8.500" r="8" fill="#1a7ec4"/><path d="M3 11C5 6 10 4 15 8 15 11 11 11 9 11 10 14 13 14 15 13 11 18 4 17 3 11Z" fill="#3ec8a0"/></svg>
<svg style="left:121px;top:1056px" width="16" height="16"><circle cx="8" cy="8" r="8" fill="#d9433a"/><path d="M8 8 15.500 5.500A8 8 0 0 1 8 16Z" fill="#f4c20d"/><path d="M8 8 8 16A8 8 0 0 1 1 4Z" fill="#34a853"/><circle cx="8" cy="8" r="3.500" fill="#4d8df0" stroke="#fff"/></svg>
<svg style="left:158px;top:1055px" width="17" height="18"><path d="M.5 1.500H13V17.500H.5Z" fill="#fff" stroke="#666"/><rect x="2" y="11" width="10" height="5" fill="#3da02e"/><rect x="2" y="7" width="10" height="4" fill="#d6ec8a"/><path d="M5 13 15 2" stroke="#e8a020" stroke-width="2"/><path d="M14 3 16 0" stroke="#a02020" stroke-width="2"/></svg>
<svg style="left:195px;top:1055px" width="16" height="17"><rect width="16" height="17" fill="#f1f1f1"/><path d="M2 7 6 6 7 1 9 5 15 3 12 8 15 13 10 11 8 16 6 12 1 13 3 9Z" fill="#f00"/></svg>
<svg style="left:232px;top:1055px" width="16" height="17"><path d="M3 1H15L13 16H1Z" fill="#b8dbe8" stroke="#7c9aa8"/><path d="M4 4H13M4 7H13M3.500 10H12M3 13H11" stroke="#7fa6b6"/></svg>
<svg style="left:269px;top:1056px" width="16" height="14"><rect width="16" height="14" fill="#000" stroke="#666"/><rect width="16" height="2.500" fill="#888"/></svg><div class="t" style="left:270px;top:1059px;color:#fff;font:8px/10px 'Liberation Mono',monospace;letter-spacing:0">C:\_</div>
<svg style="left:306px;top:1055px" width="16" height="17"><path d="M11 0 16 2V15L11 17 4 11 1 13 0 12V5L1 4 4 6ZM11 5 7 8.500 11 12Z" fill="#8358c8"/></svg>
<svg style="left:343px;top:1056px" width="16" height="16"><path d="M0 1H6L8 3H16V15H0Z" fill="#f8c63c"/><rect x="0" y="1" width="7" height="3" fill="#d99c1c"/><rect x="4" y="7" width="8" height="9" fill="#1e7fd4"/><rect x="7" y="11" width="2" height="5" fill="#f8c63c"/></svg>
<svg style="left:380px;top:1056px" width="17" height="16"><ellipse cx="7" cy="9.500" rx="6.500" ry="6" fill="#dde4ec" stroke="#708094"/><circle cx="4" cy="8" r="1.200" fill="#e04a3a"/><circle cx="7" cy="6" r="1.200" fill="#3a9a4a"/><circle cx="10" cy="8" r="1.200" fill="#3a7ae0"/><path d="M14 0 13 15" stroke="#d88838" stroke-width="2"/></svg>
<div style="left:417px;top:1056px;width:16px;height:16px;background:#fff;color:#12bcc8;font:bold 14px/16px 'Liberation Sans',sans-serif;text-align:center;letter-spacing:0">A</div>
<svg style="left:454px;top:1056px" width="16" height="16"><rect width="16" height="16" fill="#b01010"/><path d="M2 13C5 11 7 7 7.500 3 8 7 10 9.500 14 10 10 10 6 11 2 13Z" fill="none" stroke="#fff"/></svg>
<svg style="left:490px;top:1055px" width="18" height="18"><use href="#fl"/></svg>
<div class="u" style="left:115px;width:20px"></div><div class="ul" style="left:135px;width:8px"></div>
<div class="u" style="left:152px;width:28px"></div>
<div class="u" style="left:226px;width:28px"></div>
<div class="u" style="left:337px;width:20px"></div><div class="ul" style="left:357px;width:8px"></div>
<div class="u" style="left:374px;width:20px"></div><div class="ul" style="left:394px;width:8px"></div>
<div class="u" style="left:411px;width:28px"></div>
<div class="u" style="left:448px;width:20px"></div><div class="ul" style="left:468px;width:8px"></div>
<div class="u" style="left:481px;width:36px"></div>
<svg style="left:1725px;top:1061px" width="12" height="7"><path d="M.5 6.500 6 1 11.500 6.500" fill="none" stroke="#000" stroke-width="1.200"/></svg>
<svg style="left:1747px;top:1056px" width="17" height="15"><path d="M1 5H4L8 1.500V13.500L4 10H1Z" fill="none" stroke="#000"/><path d="M10.500 5A4 4 0 0 1 10.500 10" fill="none" stroke="#000"/><path d="M13 3A7 7 0 0 1 13 12M15 1.500A9.500 9.500 0 0 1 15 13.500" fill="none" stroke="#8a8a8a"/></svg>
<svg style="left:1771px;top:1058px" width="16" height="14"><path d="M2.500 1.500H15.500V10.500H4M9 10.500V13M5.500 13.500H12.500" fill="none" stroke="#000"/><rect x=".5" y=".5" width="4" height="4" fill="none" stroke="#000"/></svg>
<div class="t k" style="left:1801px;top:1058px;letter-spacing:-.2px">ITA</div>
<div class="t k" style="left:1834px;top:1058px;letter-spacing:-.2px">19:08</div>
<svg style="left:1878px;top:1056px" width="16" height="17"><path d="M0 0H16V13H10L8 15.500 6 13H0Z" fill="#000"/><path d="M3 3.500H13M3 6.500H13M3 9.500H13" stroke="#fff"/></svg>
<div style="left:1914px;top:1049px;width:1px;height:30px;background:#9aa4ac"></div>
</body></html>
